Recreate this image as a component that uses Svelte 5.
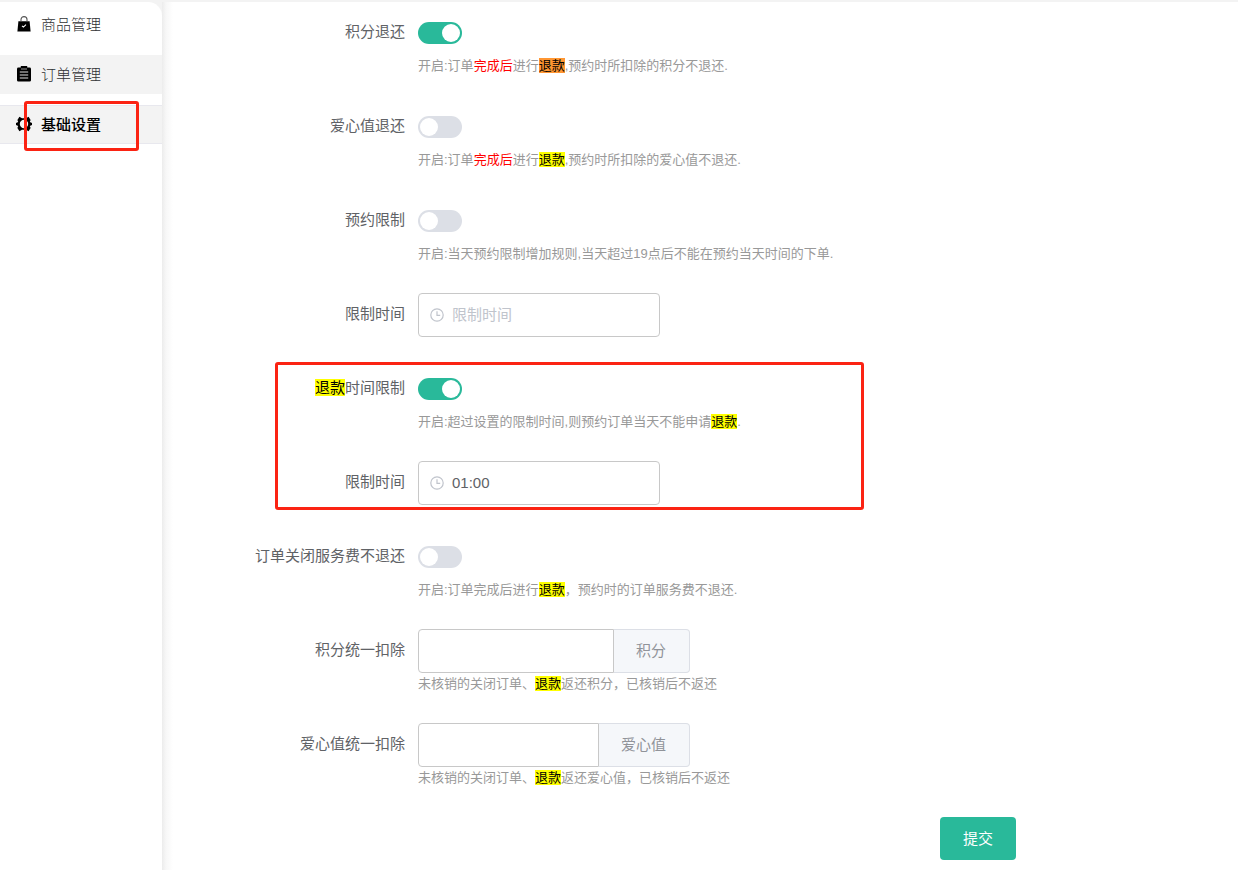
<script lang="ts">
	interface MenuItem {
		id: string;
		label: string;
	}

	const menu: MenuItem[] = [
		{ id: 'goods', label: '商品管理' },
		{ id: 'orders', label: '订单管理' },
		{ id: 'settings', label: '基础设置' }
	];

	let form = $state({
		refundPoints: true,
		refundLove: false,
		bookingLimit: false,
		bookingTime: '',
		refundLimit: true,
		refundTime: '01:00',
		keepServiceFee: false,
		pointsDeduct: '',
		loveDeduct: ''
	});
</script>

{#snippet clock()}
	<svg class="clock" viewBox="0 0 14 14" aria-hidden="true">
		<circle cx="7" cy="7" r="6.2" />
		<path d="M7 3.2V7.4H10.2" />
	</svg>
{/snippet}

<div class="page">
	<nav class="sidebar">
		{#each menu as item (item.id)}
			<a href="#{item.id}" class="menu-item {item.id}">
				<svg class="menu-icon" viewBox="0 0 16 16" aria-hidden="true">
					{#if item.id === 'goods'}
						<path d="M2.4 5.2h11.2l1 10.4H1.4z" />
						<path d="M5 5.4V3.6a3 3 0 0 1 6 0v1.8" fill="none" stroke="#555" stroke-width="1.1" />
						<path d="M6 9.8l1.4 1.3 2.6-2.4" fill="none" stroke="#fff" stroke-width="1.1" />
					{:else if item.id === 'orders'}
						<path d="M2.4 1.6h2.4V0h6.4v1.6h2.4Q15 1.600 15 3v11.200q0 1.400-1.400 1.400H2.400Q1 15.600 1 14.200V3Q1 1.600 2.400 1.600z" />
						<path d="M3.800 6h8.400M3.800 9h8.400M3.800 12h8.400" stroke="#ddd" stroke-width="1.200" />
						<path d="M5 3h6" stroke="#999" stroke-width="1" />
					{:else}
						<path
							fill-rule="evenodd"
							d="M3.400.8L6 2.200h4L12.600.8l2 3.200-.8 2L16 7v2l-2.200 1 .8 2-2 3.200-2.600-1.400H6l-2.600 1.400-2-3.200.8-2L0 9V7l2.200-1-.8-2zM8 3.800a4.200 4.200 0 1 0 0 8.400 4.200 4.200 0 0 0 0-8.400z"
						/>
					{/if}
				</svg>
				<span>{item.label}</span>
			</a>
		{/each}
		<div class="marker menu-marker"></div>
	</nav>

	<main class="content">
		<form onsubmit={(e) => e.preventDefault()}>
			<div class="row">
				<label for="refund-points">积分退还</label>
				<div class="field">
					<input id="refund-points" type="checkbox" class="switch" bind:checked={form.refundPoints} />
					<p class="help">
						开启:订单<span class="warn">完成后</span>进行<mark class="active">退款</mark>,预约时所扣除的积分不退还.
					</p>
				</div>
			</div>

			<div class="row">
				<label for="refund-love">爱心值退还</label>
				<div class="field">
					<input id="refund-love" type="checkbox" class="switch" bind:checked={form.refundLove} />
					<p class="help">
						开启:订单<span class="warn">完成后</span>进行<mark>退款</mark>,预约时所扣除的爱心值不退还.
					</p>
				</div>
			</div>

			<div class="row">
				<label for="booking-limit">预约限制</label>
				<div class="field">
					<input id="booking-limit" type="checkbox" class="switch" bind:checked={form.bookingLimit} />
					<p class="help">开启:当天预约限制增加规则,当天超过19点后不能在预约当天时间的下单.</p>
				</div>
			</div>

			<div class="row">
				<label for="booking-time">限制时间</label>
				<div class="field">
					<div class="time-input">
						{@render clock()}
						<input id="booking-time" type="text" placeholder="限制时间" bind:value={form.bookingTime} />
					</div>
				</div>
			</div>

			<div class="group">
				<div class="row">
					<label for="refund-limit"><mark>退款</mark>时间限制</label>
					<div class="field">
						<input id="refund-limit" type="checkbox" class="switch" bind:checked={form.refundLimit} />
						<p class="help">开启:超过设置的限制时间,则预约订单当天不能申请<mark>退款</mark>.</p>
					</div>
				</div>

				<div class="row">
					<label for="refund-time">限制时间</label>
					<div class="field">
						<div class="time-input">
							{@render clock()}
							<input id="refund-time" type="text" placeholder="限制时间" bind:value={form.refundTime} />
						</div>
					</div>
				</div>
				<div class="marker group-marker"></div>
			</div>

			<div class="row">
				<label for="service-fee">订单关闭服务费不退还</label>
				<div class="field">
					<input id="service-fee" type="checkbox" class="switch" bind:checked={form.keepServiceFee} />
					<p class="help">开启:订单完成后进行<mark>退款</mark>，预约时的订单服务费不退还.</p>
				</div>
			</div>

			<div class="row">
				<label for="points-deduct">积分统一扣除</label>
				<div class="field">
					<div class="append-input">
						<input id="points-deduct" type="text" bind:value={form.pointsDeduct} />
						<span class="append">积分</span>
					</div>
					<p class="help">未核销的关闭订单、<mark>退款</mark>返还积分，已核销后不返还</p>
				</div>
			</div>

			<div class="row">
				<label for="love-deduct">爱心值统一扣除</label>
				<div class="field">
					<div class="append-input">
						<input id="love-deduct" type="text" bind:value={form.loveDeduct} />
						<span class="append">爱心值</span>
					</div>
					<p class="help">未核销的关闭订单、<mark>退款</mark>返还爱心值，已核销后不返还</p>
				</div>
			</div>

			<div class="actions">
				<button type="submit">提交</button>
			</div>
		</form>
	</main>
</div>

<style>
	:global(body) {
		margin: 0;
		background: #f3f3f3;
	}

	.page {
		display: flex;
		min-height: 100vh;
		padding-top: 2px;
		box-sizing: border-box;
		font-family: 'Liberation Sans', 'Noto Sans CJK SC', sans-serif;
		font-size: 15px;
		color: #606266;
	}

	.page :is(input, button) {
		box-sizing: border-box;
		font: inherit;
	}

	.sidebar {
		position: relative;
		flex: none;
		width: 162px;
		padding-top: 3px;
		box-sizing: border-box;
		background: #fff;
		border-top-right-radius: 14px;
	}

	.menu-item {
		display: flex;
		align-items: center;
		gap: 9px;
		height: 39px;
		margin-bottom: 11px;
		padding: 0 0 2px 16px;
		box-sizing: border-box;
		color: #303133;
		font-weight: 300;
		text-decoration: none;
	}

	.menu-item.orders {
		background: #f3f3f3;
	}

	.menu-item.settings {
		background: #f3f3f3;
		border-top: 1px solid #e8e8ee;
		border-bottom: 1px solid #e8e8ee;
		color: #000;
		font-weight: 500;
	}

	.menu-icon {
		width: 16px;
		height: 16px;
		fill: #000;
	}

	/* red annotation frames lie over the page */
	.marker {
		position: absolute;
		box-sizing: border-box;
		border: 3px solid #fb2313;
		border-radius: 3px;
		pointer-events: none;
	}

	.menu-marker {
		top: 99px;
		left: 24px;
		width: 115px;
		height: 50px;
	}

	.group-marker {
		top: -5px;
		bottom: -5px;
		left: 73px;
		width: 589px;
	}

	.content {
		flex: 1;
		min-width: 0;
		padding: 9px 0 10px 40px;
		background: linear-gradient(to right, #ececec, #f7f7f7 4px, #fff 11px);
	}

	.row {
		display: flex;
		gap: 13px;
		margin-bottom: 30px;
	}

	.row:has(.help) {
		margin-bottom: 28px;
	}

	.row > label {
		flex: none;
		width: 203px;
		line-height: 42px;
		text-align: right;
	}

	.field {
		flex: 1;
		min-width: 0;
	}

	.group {
		position: relative;
		margin-bottom: 30px;
	}

	.group .row:nth-child(2) {
		margin-bottom: 0;
	}

	.help {
		margin: 0;
		font-size: 13px;
		line-height: 22px;
		color: #999;
	}

	.warn {
		color: #f00;
	}

	mark {
		background: #ff0;
		color: #000;
	}

	mark.active {
		background: #ff9632;
	}

	.switch {
		appearance: none;
		display: block;
		width: 44px;
		height: 22px;
		margin: 11px 0;
		padding: 2px;
		border-radius: 11px;
		background: #dcdfe6;
		cursor: pointer;
	}

	.switch::before {
		content: '';
		display: block;
		width: 18px;
		height: 18px;
		border-radius: 50%;
		background: #fff;
	}

	.switch:checked {
		background: #29b99a;
	}

	.switch:checked::before {
		margin-left: auto;
	}

	.time-input,
	.append-input {
		display: flex;
		height: 44px;
		box-sizing: border-box;
	}

	.time-input {
		align-items: center;
		gap: 8px;
		width: 242px;
		padding: 0 11px;
		border: 1px solid #c8c8c8;
		border-radius: 4px;
	}

	.append-input {
		width: 272px;
	}

	.clock {
		flex: none;
		width: 14px;
		height: 14px;
		fill: none;
		stroke: #c0c4cc;
		stroke-width: 1.2;
	}

	input[type='text'] {
		flex: 1;
		min-width: 0;
		height: 42px;
		padding: 0 0 2px;
		border: 0;
		outline: 0;
		background: none;
		color: #606266;
	}

	.append-input input[type='text'] {
		height: 44px;
		padding: 0 15px;
		border: 1px solid #c8c8c8;
		border-radius: 4px 0 0 4px;
	}

	input::placeholder {
		color: #c0c4cc;
		opacity: 1;
	}

	.append {
		padding: 0 23px 0 22px;
		border: 1px solid #dcdfe6;
		border-left: 0;
		border-radius: 0 4px 4px 0;
		line-height: 42px;
		background: #f5f7fa;
		color: #909399;
	}

	.actions {
		display: flex;
		justify-content: flex-end;
		padding-right: 222px;
	}

	button {
		height: 43px;
		padding: 0 23px 2px;
		border: 0;
		border-radius: 4px;
		background: #29b99a;
		color: #fff;
		cursor: pointer;
	}
</style>
